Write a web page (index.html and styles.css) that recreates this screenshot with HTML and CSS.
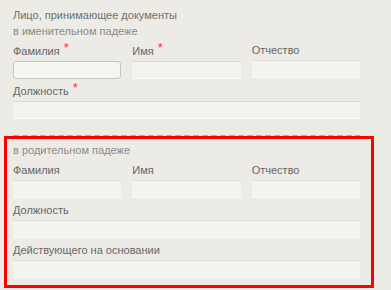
FILE: index.html
```html
<!DOCTYPE html>
<html>
<head lang="ru">
    <meta charset="UTF-8">
    <title>Лицо, принимающее документы</title>
    <link rel="stylesheet" href="styles.css">
</head>
<body>
<div class="form">
    <div class="title">Лицо, принимающее документы</div>
    <div class="subtitle">в именительном падеже</div>
    <div class="row">
        <div class="field">
            <label>Фамилия <span class="req">*</span></label>
            <div class="input focus"></div>
        </div>
        <div class="field">
            <label>Имя <span class="req">*</span></label>
            <div class="input"></div>
        </div>
        <div class="field">
            <label>Отчество</label>
            <div class="input"></div>
        </div>
    </div>
    <div class="field">
        <label>Должность <span class="req">*</span></label>
        <div class="input"></div>
    </div>
    <div class="dashed"></div>
    <div class="section">
        <div class="subtitle">в родительном падеже</div>
        <div class="row">
            <div class="field">
                <label>Фамилия</label>
                <div class="input"></div>
            </div>
            <div class="field">
                <label>Имя</label>
                <div class="input"></div>
            </div>
            <div class="field">
                <label>Отчество</label>
                <div class="input"></div>
            </div>
        </div>
        <div class="field">
            <label>Должность</label>
            <div class="input"></div>
        </div>
        <div class="field">
            <label>Действующего на основании</label>
            <div class="input"></div>
        </div>
    </div>
</div>
</body>
</html>
```

FILE: styles.css
```css
* {
    margin: 0px;
    padding: 0px;
    box-sizing: border-box;
}
body {
    background-color: #ecebe5;
    font-family: "Liberation Sans", Arial, sans-serif;
    font-size: 11px;
    line-height: 15px;
    color: #666;
}
.form {
    width: 360px;
    padding: 8px 0 0 13px;
}
.title {
    color: #707070;
}
.subtitle {
    color: #8a8a8a;
    line-height: 16px;
}
.row {
    display: flex;
    gap: 11px;
}
.row .field {
    flex: 1;
}
.field {
    padding-top: 4px;
}
.field label {
    display: block;
}
.req {
    color: #f33;
    font-size: 13px;
    position: relative;
    top: -3px;
    margin-left: 1px;
}
.input {
    height: 18px;
    margin-top: 2px;
    background-color: #f3f3ef;
    border-top: 1px solid #dcdcd6;
    border-bottom: 1px solid #fbfbf8;
}
.input.focus {
    border: 1px solid #c6c6c0;
    border-radius: 3px;
    background-color: #f5f5f1;
}
.dashed {
    margin-top: 16px;
    height: 1px;
    background: repeating-linear-gradient(90deg, #aaa 0, #aaa 6px, transparent 6px, transparent 9px);
}
.section {
    margin: 0 -14px 0 -9px;
    border: 3px solid #f00;
    padding: 3px 11px 7px 6px;
}
.section .field {
    padding-top: 5px;
}
```
